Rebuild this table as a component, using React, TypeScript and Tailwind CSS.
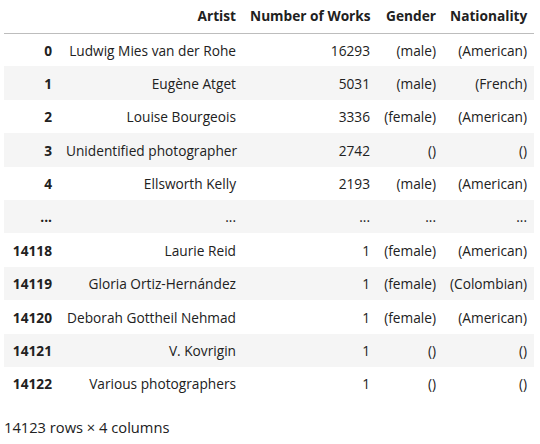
// DataFrame preview table (notebook output style)
interface Row {
  idx: string;
  artist: string;
  works: string;
  gender: string;
  nationality: string;
}

const rows: Row[] = [
  { idx: "0", artist: "Ludwig Mies van der Rohe", works: "16293", gender: "(male)", nationality: "(American)" },
  { idx: "1", artist: "Eugène Atget", works: "5031", gender: "(male)", nationality: "(French)" },
  { idx: "2", artist: "Louise Bourgeois", works: "3336", gender: "(female)", nationality: "(American)" },
  { idx: "3", artist: "Unidentified photographer", works: "2742", gender: "()", nationality: "()" },
  { idx: "4", artist: "Ellsworth Kelly", works: "2193", gender: "(male)", nationality: "(American)" },
  { idx: "...", artist: "...", works: "...", gender: "...", nationality: "..." },
  { idx: "14118", artist: "Laurie Reid", works: "1", gender: "(female)", nationality: "(American)" },
  { idx: "14119", artist: "Gloria Ortiz-Hernández", works: "1", gender: "(female)", nationality: "(Colombian)" },
  { idx: "14120", artist: "Deborah Gottheil Nehmad", works: "1", gender: "(female)", nationality: "(American)" },
  { idx: "14121", artist: "V. Kovrigin", works: "1", gender: "()", nationality: "()" },
  { idx: "14122", artist: "Various photographers", works: "1", gender: "()", nationality: "()" },
];

const cell = "px-[7px] pt-[2px] text-right whitespace-nowrap";

export default function App() {
  return (
    <div
      className="w-[540px] h-[444px] bg-white pl-1 text-[13.7px] text-[#212121]"
      style={{ fontFamily: '"Open Sans", "Noto Sans", sans-serif' }}
    >
      <table className="border-collapse table-fixed w-[530px]">
        <colgroup>
          <col className="w-[55px]" />
          <col className="w-[184px]" />
          <col className="w-[134px]" />
          <col className="w-[66px]" />
          <col className="w-[91px]" />
        </colgroup>
        <thead>
          <tr className="h-[33px] border-b border-[#bdbdbd]">
            <th className="px-[7px]"></th>
            <th className="px-[7px] text-right font-bold">Artist</th>
            <th className="px-[7px] text-right font-bold whitespace-nowrap">Number of Works</th>
            <th className="px-[7px] text-right font-bold">Gender</th>
            <th className="px-[7px] text-right font-bold">Nationality</th>
          </tr>
        </thead>
        <tbody>
          {rows.map((r, i) => (
            <tr
              key={r.idx + i}
              className={`h-[33.4px] ${i % 2 === 1 ? "bg-[#f5f5f5]" : "bg-white"}`}
            >
              <th className={`${cell} font-bold`}>{r.idx}</th>
              <td className={cell}>{r.artist}</td>
              <td className={cell}>{r.works}</td>
              <td className={cell}>{r.gender}</td>
              <td className={cell}>{r.nationality}</td>
            </tr>
          ))}
        </tbody>
      </table>
      <p className="mt-[17px] text-[14.7px] leading-[20px]">14123 rows × 4 columns</p>
    </div>
  );
}
